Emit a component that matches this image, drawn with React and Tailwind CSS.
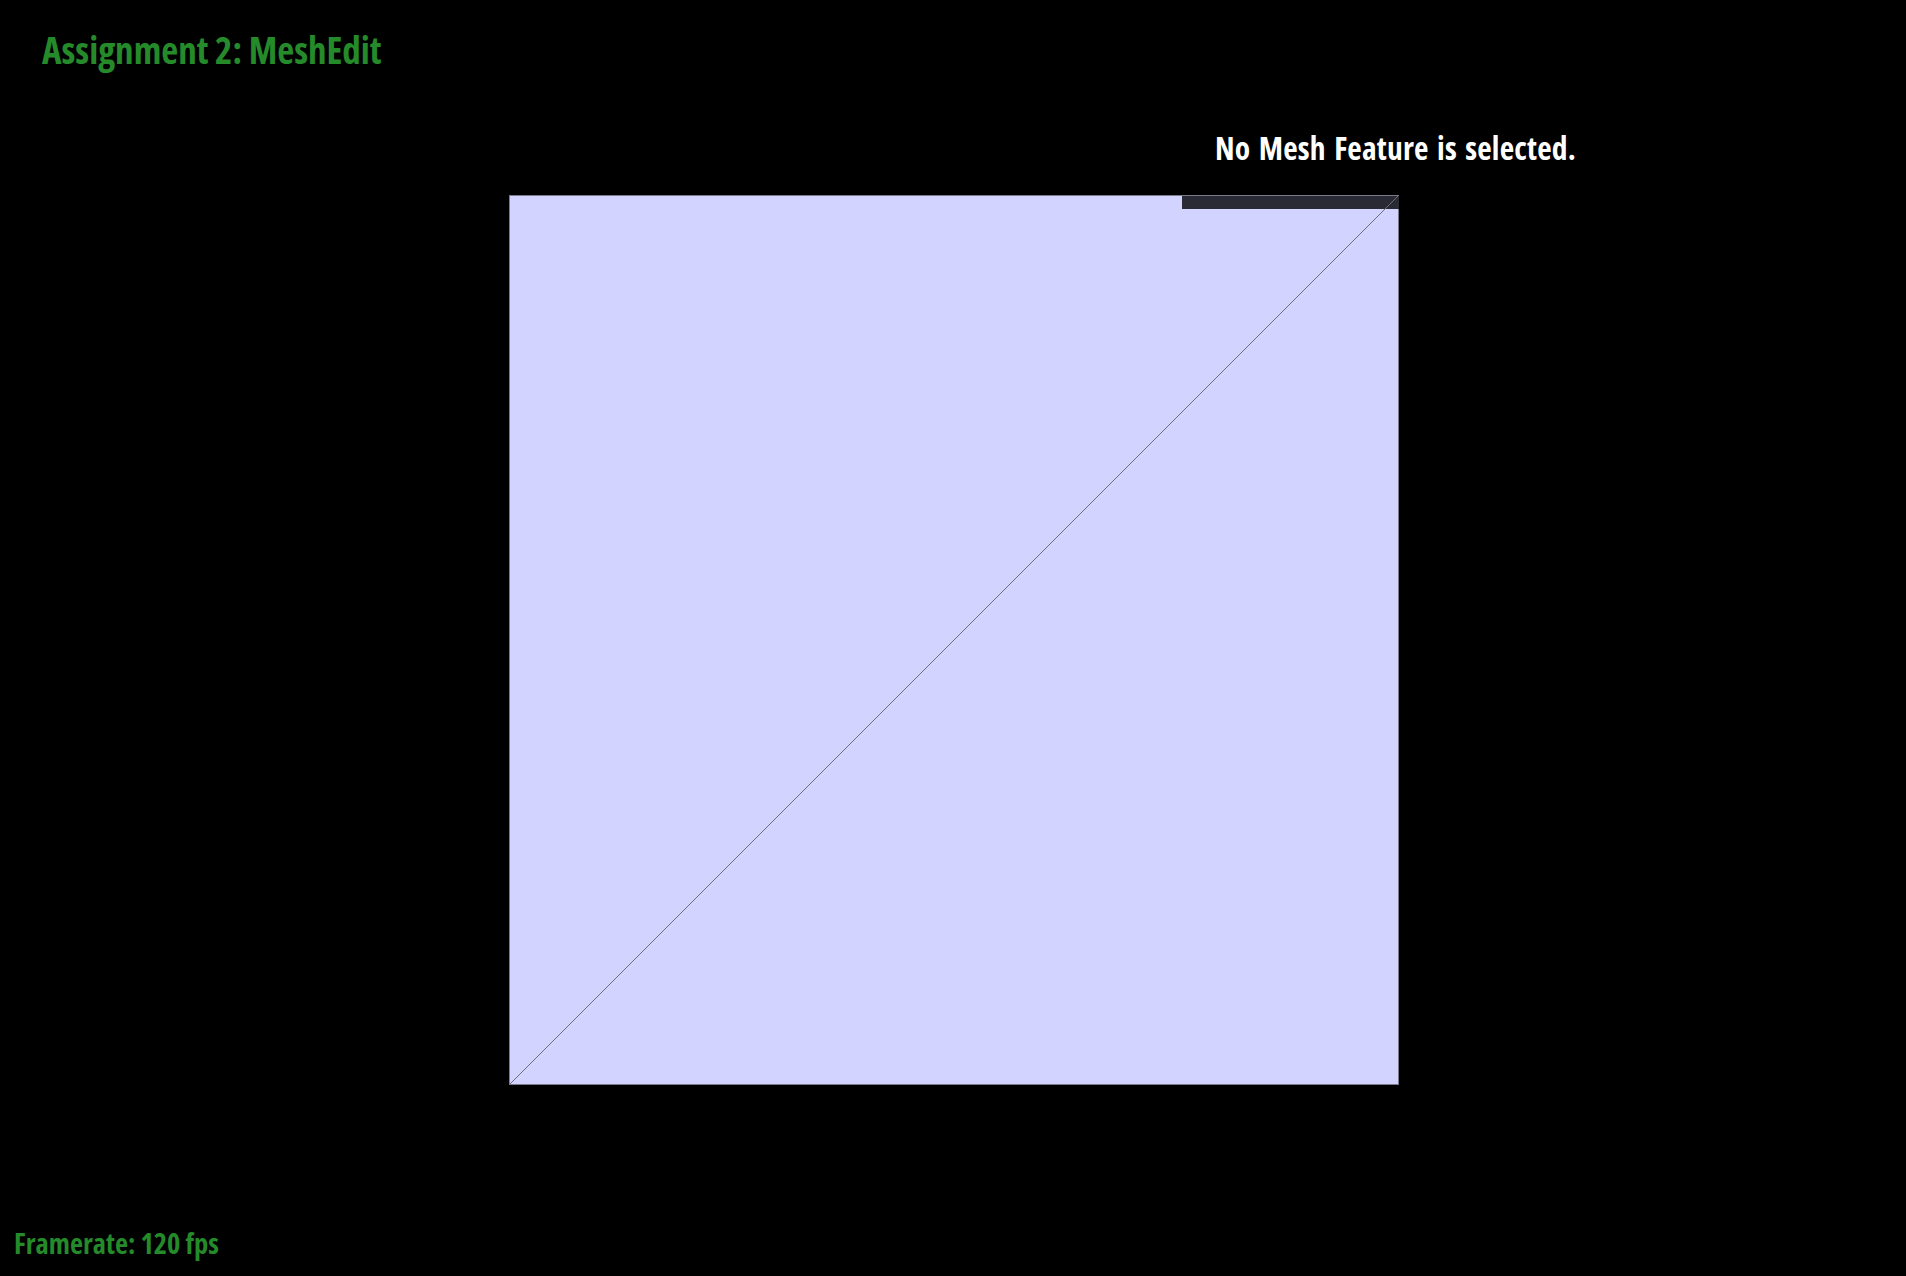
import React from "react";

export default function App() {
  const font = { fontFamily: '"Open Sans", "Noto Sans", sans-serif' };
  return (
    <div
      className="w-[1906px] h-[1276px] bg-black flex flex-col overflow-hidden"
      style={font}
    >
      <div className="ml-[42px] mt-[31px] text-[37px] leading-none font-bold font-stretch-condensed text-[#258a2a]">
        Assignment 2: MeshEdit
      </div>
      <div className="relative ml-[509px] mt-[127px] w-[890px] h-[890px] bg-[#d3d3ff] border border-[#7a7a88]">
        <div className="absolute left-[672px] top-0 w-[217px] h-[13px] bg-[#2a2a35]" />
        <svg
          className="absolute inset-0"
          width="888"
          height="888"
          viewBox="0 0 888 888"
        >
          <line x1="0" y1="888" x2="888" y2="0" stroke="#6e6e7a" strokeWidth="1" />
        </svg>
        <div className="absolute left-[705px] top-[-64px] whitespace-nowrap text-[31.5px] leading-none font-bold font-stretch-condensed tracking-[0.2px] [word-spacing:2.5px] text-white">
          No Mesh Feature is selected.
        </div>
      </div>
      <div className="flex-1" />
      <div className="ml-[14px] mb-[19px] text-[28.4px] leading-none font-bold font-stretch-condensed text-[#258a2a]">
        Framerate: 120 fps
      </div>
    </div>
  );
}
